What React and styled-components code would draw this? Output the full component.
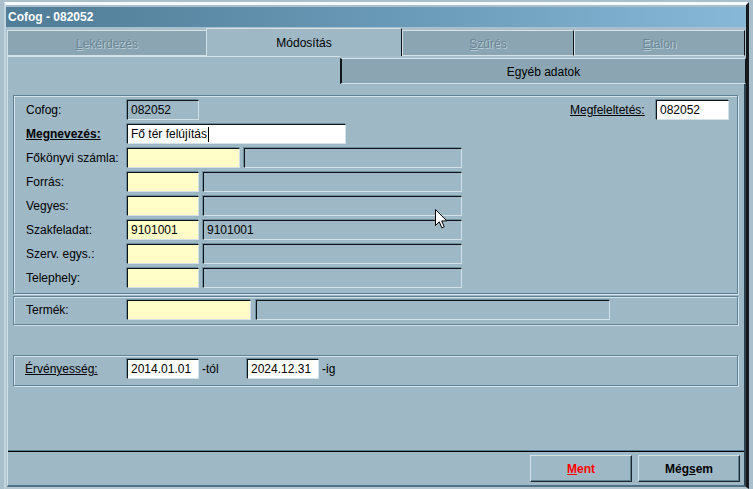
import React from 'react';
import styled, { createGlobalStyle } from 'styled-components';

const GlobalStyle = createGlobalStyle`
  html, body { margin: 0; padding: 0; }
  body {
    font-family: "Liberation Sans", Arial, sans-serif;
    font-size: 12px;
    color: #000;
    background: #aabfcc;
  }
  * { box-sizing: border-box; }
`;

const PAGE = '#9fb8c6';
const TAB_OFF = '#8ba6b2';
const LIGHT = '#d3e2e9';
const DARK = '#5f8294';

const Screen = styled.div`
  width: 753px;
  height: 489px;
  padding: 2px 0 0 4px;
  background: #aabfcc;
  overflow: hidden;
`;

const Window = styled.div`
  width: 745px;
  height: 487px;
  display: flex;
  flex-direction: column;
  padding-top: 2px;
  background: #a9c0cc;
  border-top: 3px solid #f7fafb;
  border-left: 2px solid #c3d5de;
  border-right: 3px solid #15191c;
  border-bottom: 2px solid #b4c7d1;
`;

const TitleBar = styled.div`
  height: 20px;
  flex: none;
  margin-bottom: 1px;
  display: flex;
  align-items: center;
  padding-left: 2px;
  background: linear-gradient(to right, #4f7c96, #6a9bb8 55%, #88b8d8);
  color: #fff;
  font-weight: bold;
  font-size: 12px;
`;

const TabRow = styled.div`
  height: 28px;
  flex: none;
  display: flex;
  align-items: flex-end;
  padding-left: ${({ $indent }) => $indent || 0}px;
`;

const Tab = styled.div`
  width: ${({ $w }) => ($w ? `${$w}px` : 'auto')};
  flex: ${({ $w }) => ($w ? 'none' : '1')};
  height: ${({ $active }) => ($active ? 28 : 26)}px;
  display: flex;
  align-items: center;
  justify-content: center;
  background: ${({ $active }) => ($active ? PAGE : TAB_OFF)};
  border-top: 1px solid ${LIGHT};
  border-left: ${({ $edge }) => ($edge ? `2px solid #101418` : `1px solid ${LIGHT}`)};
  border-right: ${({ $noShadow }) => ($noShadow ? 'none' : '1px solid #101418')};
  border-bottom: ${({ $active }) => ($active ? 'none' : `1px solid ${LIGHT}`)};
  color: ${({ $disabled }) => ($disabled ? '#6b8694' : '#000')};
  text-shadow: ${({ $disabled }) => ($disabled ? '1px 1px 0 #b9ccd5' : 'none')};
  font-size: 12px;
  padding-top: 1px;

  u { text-decoration: underline; }
`;

const BlankTab = styled.div`
  width: 333px;
  height: 28px;
  flex: none;
  background: ${PAGE};
  border-top: 1px solid ${LIGHT};
  border-left: 1px solid ${LIGHT};
`;

const Page = styled.div`
  flex: 1;
  position: relative;
  display: flex;
  flex-direction: column;
  margin-left: 1px;
  background: ${PAGE};
  border-left: 1px solid ${LIGHT};
  border-right: 2px solid #2e4452;
  border-bottom: 2px solid #4f7184;
`;

const Content = styled.div`
  display: flex;
  flex-direction: column;
  padding: 11px 6px 0 5px;
`;

const Group = styled.div`
  display: flex;
  flex-direction: column;
  gap: 4px;
  margin-top: ${({ $top }) => $top || 0}px;
  padding: ${({ $pad }) => $pad};
  border: 1px solid ${DARK};
  box-shadow: inset 1px 1px 0 ${LIGHT}, 1px 1px 0 ${LIGHT};
`;

const Row = styled.div`
  height: 20px;
  display: flex;
  align-items: center;
  gap: ${({ $gap }) => ($gap === undefined ? 4 : $gap)}px;
`;

const Label = styled.div`
  width: ${({ $w }) => $w || 101}px;
  flex: none;
  font-weight: ${({ $bold }) => ($bold ? 'bold' : 'normal')};
  text-decoration: ${({ $u }) => ($u ? 'underline' : 'none')};
  margin-right: ${({ $mr }) => ($mr === undefined ? -4 : $mr)}px;
  white-space: nowrap;
`;

const Field = styled.div`
  width: ${({ $w }) => $w}px;
  height: 20px;
  flex: none;
  display: flex;
  align-items: center;
  padding: 0 3px;
  margin-right: ${({ $mr }) => $mr || 0}px;
  background: ${({ $bg }) => $bg || PAGE};
  border-top: 1px solid #0e1418;
  border-left: 1px solid #0e1418;
  border-right: 1px solid ${LIGHT};
  border-bottom: 1px solid ${LIGHT};
  box-shadow: -1px -1px 0 #6f8f9f;
  font-size: 12px;
  white-space: nowrap;
`;

const Caret = styled.span`
  display: inline-block;
  width: 1px;
  height: 15px;
  background: #000;
  margin-left: 1px;
`;

const Spacer = styled.div`
  flex: 1;
`;

const Suffix = styled.div`
  width: ${({ $w }) => $w}px;
  flex: none;
  padding-left: 3px;
  margin-left: -4px;
`;

const Footer = styled.div`
  margin-top: auto;
  display: flex;
  justify-content: flex-end;
  gap: 6px;
  padding: 3px 4px 3px 0;
  border-top: 1px solid #000;
  box-shadow: 0 -1px 0 #5a7c8e;
`;

const Button = styled.div`
  width: 102px;
  height: 27px;
  display: flex;
  align-items: center;
  justify-content: center;
  background: ${PAGE};
  border-top: 1px solid ${LIGHT};
  border-left: 1px solid ${LIGHT};
  border-right: 1px solid #1c2a32;
  border-bottom: 1px solid #1c2a32;
  box-shadow: inset -1px -1px 0 #5d7f90;
  font-weight: bold;
  font-size: 12px;
  color: ${({ $accent }) => ($accent ? '#ff0000' : '#000')};
`;

const Pointer = styled.svg`
  position: absolute;
  left: 427px;
  top: 125px;
  pointer-events: none;
`;

const yellow = '#fffec8';

const lookupRows = [
  { label: 'Forrás:', code: '', name: '' },
  { label: 'Vegyes:', code: '', name: '' },
  { label: 'Szakfeladat:', code: '9101001', name: '9101001' },
  { label: 'Szerv. egys.:', code: '', name: '' },
  { label: 'Telephely:', code: '', name: '' },
];

export default function App() {
  return (
    <>
      <GlobalStyle />
      <Screen>
        <Window>
          <TitleBar>Cofog - 082052</TitleBar>

          <TabRow $indent={1}>
            <Tab $w={199} $disabled $noShadow><u>L</u>ekérdezés</Tab>
            <Tab $w={196} $active>Módosítás</Tab>
            <Tab $w={172} $disabled><u>S</u>zűrés</Tab>
            <Tab $w={171} $disabled><u>E</u>talon</Tab>
          </TabRow>
          <TabRow $indent={1}>
            <BlankTab />
            <Tab $edge>Egyéb adatok</Tab>
          </TabRow>

          <Page>
            <Content>
              <Group $pad="4px 0 5px 12px">
                <Row>
                  <Label>Cofog:</Label>
                  <Field $w={72}>082052</Field>
                  <Spacer />
                  <Label $w={78} $u $mr={4}>Megfeleltetés:</Label>
                  <Field $w={73} $bg="#fff" $mr={8}>082052</Field>
                </Row>
                <Row>
                  <Label $bold $u>Megnevezés:</Label>
                  <Field $w={219} $bg="#fff">Fő tér felújítás<Caret /></Field>
                </Row>
                <Row>
                  <Label>Főkönyvi számla:</Label>
                  <Field $w={113} $bg={yellow} />
                  <Field $w={218} />
                </Row>
                {lookupRows.map((r) => (
                  <Row key={r.label}>
                    <Label>{r.label}</Label>
                    <Field $w={72} $bg={yellow}>{r.code}</Field>
                    <Field $w={259}>{r.name}</Field>
                  </Row>
                ))}
              </Group>

              <Group $top={2} $pad="3px 0 4px 12px">
                <Row $gap={5}>
                  <Label $mr={-5}>Termék:</Label>
                  <Field $w={124} $bg={yellow} />
                  <Field $w={354} />
                </Row>
              </Group>

              <Group $top={30} $pad="3px 0 6px 11px">
                <Row>
                  <Label $u $mr={-3}>Érvényesség:</Label>
                  <Field $w={72} $bg="#fff">2014.01.01</Field>
                  <Suffix $w={44}>-tól</Suffix>
                  <Field $w={72} $bg="#fff">2024.12.31</Field>
                  <Suffix $w={40}>-ig</Suffix>
                </Row>
              </Group>
            </Content>

            <Footer>
              <Button $accent><u>M</u>ent</Button>
              <Button>Még<u>s</u>em</Button>
            </Footer>

            <Pointer width="13" height="21" viewBox="0 0 13 21">
              <path d="M0.5 0.5 L0.5 16.5 L4.3 12.8 L6.8 18.8 L9.2 17.8 L6.7 11.9 L11.8 11.9 Z" fill="#fff" stroke="#000" strokeWidth="1" strokeLinejoin="miter" />
            </Pointer>
          </Page>
        </Window>
      </Screen>
    </>
  );
}
